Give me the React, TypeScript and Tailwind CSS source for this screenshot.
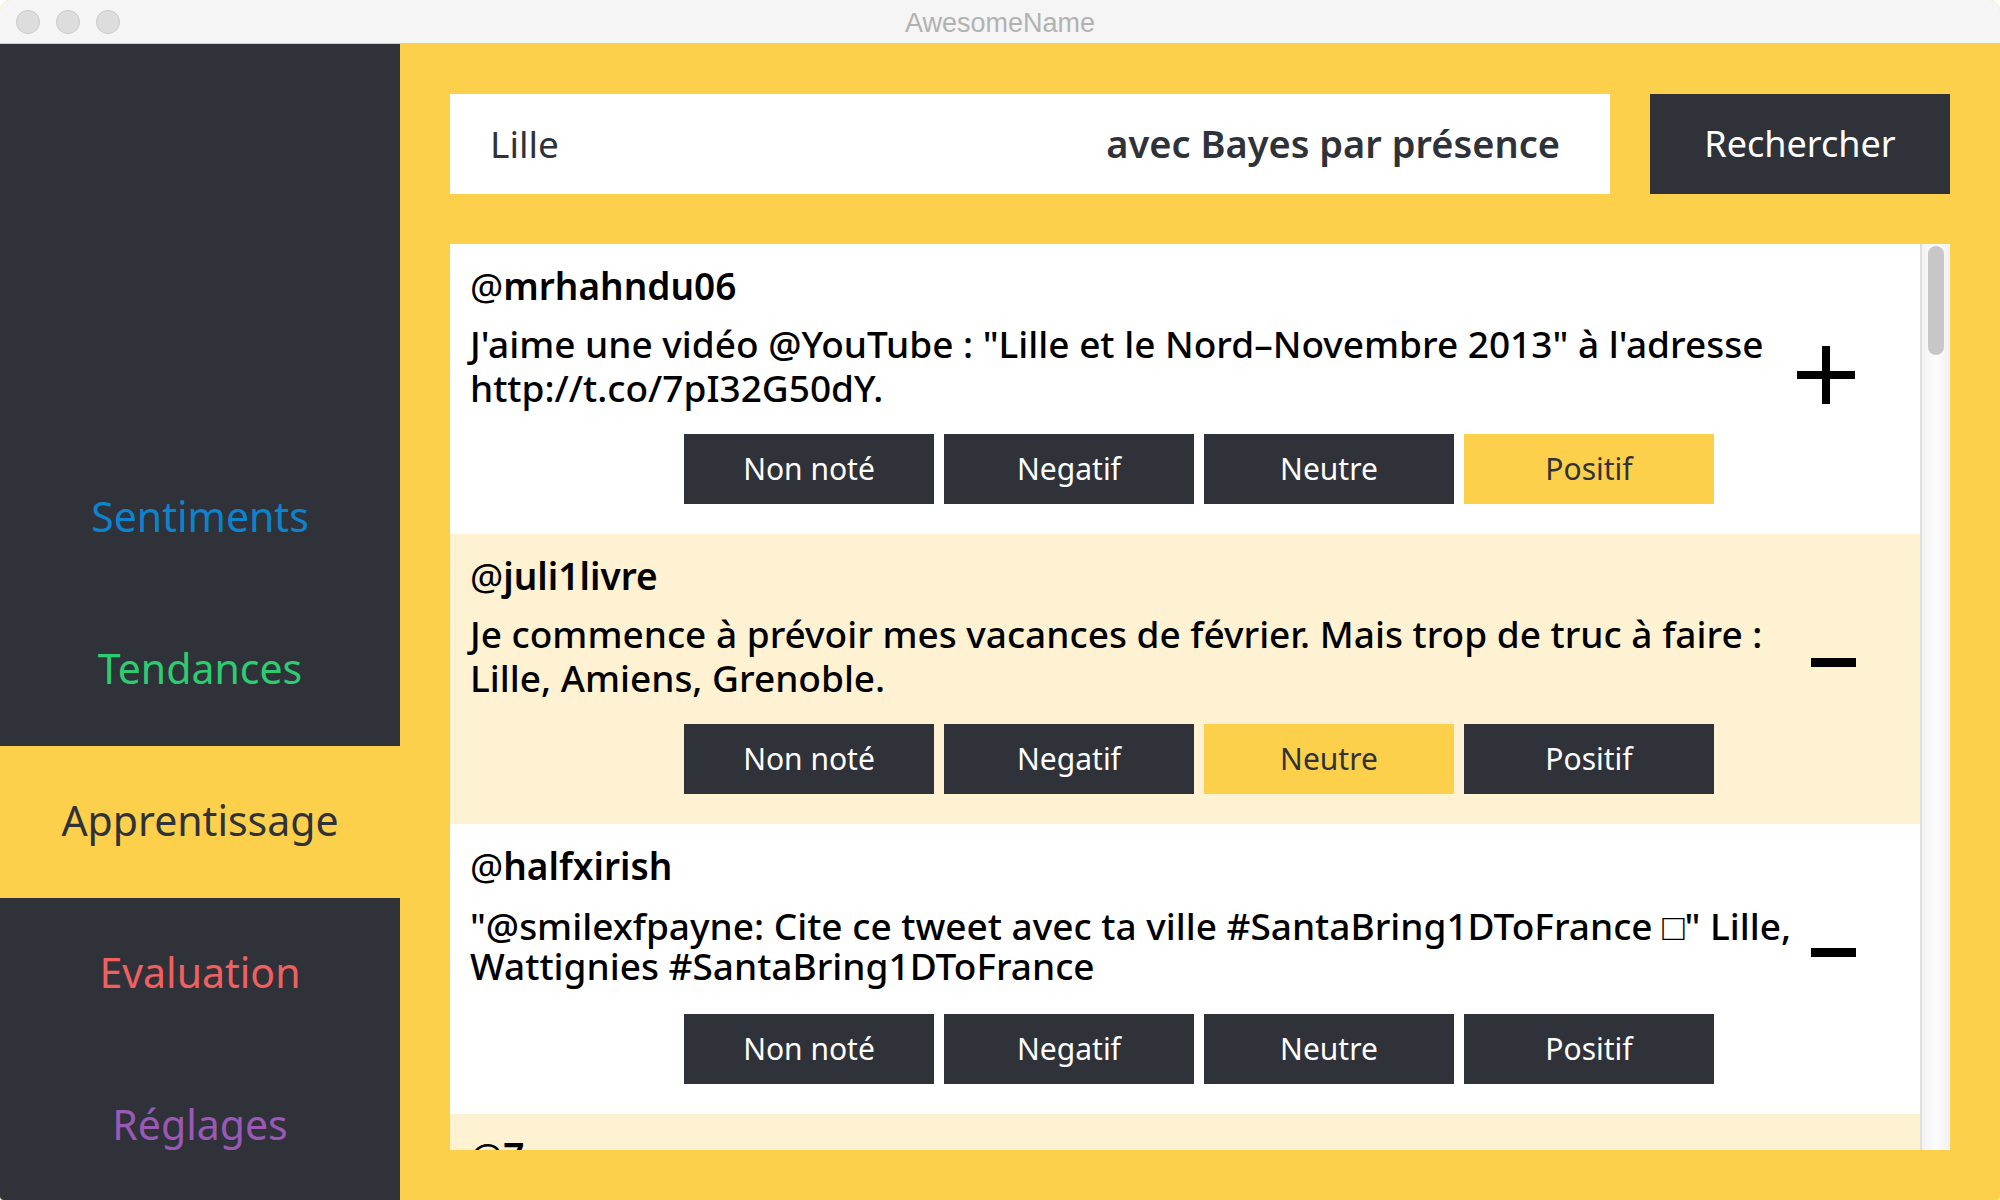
type Rating = 'Non noté' | 'Negatif' | 'Neutre' | 'Positif';

interface Tweet {
  author: string;
  text?: string;
  rating?: Rating;
  positive?: boolean;
  compact?: boolean;
}

const RATINGS: Rating[] = ['Non noté', 'Negatif', 'Neutre', 'Positif'];

const NAV = [
  { label: 'Sentiments', style: 'text-[#0e83cd]' },
  { label: 'Tendances', style: 'text-[#2ecc71]' },
  { label: 'Apprentissage', style: 'bg-[#fcd04b] text-[#30323a]', current: true },
  { label: 'Evaluation', style: 'text-[#f06060]' },
  { label: 'Réglages', style: 'text-[#9b59b6]' },
];

const TWEETS: Tweet[] = [
  {
    author: 'mrhahndu06',
    text: 'J\'aime une vidéo @YouTube : "Lille et le Nord–Novembre 2013" à l\'adresse http://t.co/7pI32G50dY.',
    rating: 'Positif',
    positive: true,
  },
  {
    author: 'juli1livre',
    text: 'Je commence à prévoir mes vacances de février. Mais trop de truc à faire : Lille, Amiens, Grenoble.',
    rating: 'Neutre',
  },
  {
    author: 'halfxirish',
    text: '"@smilexfpayne: Cite ce tweet avec ta ville #SantaBring1DToFrance □" Lille, Wattignies #SantaBring1DToFrance',
    compact: true,
  },
  { author: '7' },
];

function TitleBar() {
  return (
    <header className="relative flex h-11 shrink-0 items-center justify-center border-b border-[#cfcfcf] bg-[#f5f5f5]">
      <div className="absolute left-4 top-2.5 flex gap-4">
        <button aria-label="Fermer" className="size-6 rounded-full border border-[#cacaca] bg-[#dddddd]" />
        <button aria-label="Réduire" className="size-6 rounded-full border border-[#cacaca] bg-[#dddddd]" />
        <button aria-label="Agrandir" className="size-6 rounded-full border border-[#cacaca] bg-[#dddddd]" />
      </div>
      <h1 className="pt-0.5 font-['Liberation_Sans',sans-serif] text-[27px] leading-8 text-[#b2b2b2]">AwesomeName</h1>
    </header>
  );
}

function Sidebar() {
  return (
    <nav className="flex w-[400px] shrink-0 flex-col justify-end bg-[#30323a]">
      <div className="-mb-0.5 flex flex-col">
        {NAV.map((item) => (
          <a
            key={item.label}
            href="#"
            aria-current={item.current ? 'page' : undefined}
            className={`flex h-[152px] items-center justify-center pb-1 text-[41px] leading-none ${item.style}`}
          >
            {item.label}
          </a>
        ))}
      </div>
    </nav>
  );
}

function SearchBar() {
  return (
    <form className="flex h-[100px] shrink-0 gap-10 text-[#30323a]" onSubmit={(e) => e.preventDefault()}>
      <div className="flex min-w-0 flex-1 bg-white">
        <input
          aria-label="Recherche"
          defaultValue="Lille"
          className="min-w-0 flex-1 bg-transparent pl-10 text-[37px] outline-none"
        />
        <select
          aria-label="Méthode"
          className="appearance-none bg-transparent pb-0.5 pr-[50px] text-right text-[38px] font-semibold outline-none [text-align-last:right]"
        >
          <option>avec Bayes par présence</option>
        </select>
      </div>
      <button type="submit" className="w-[300px] bg-[#30323a] text-[36px] text-white">
        Rechercher
      </button>
    </form>
  );
}

function SentimentMark({ positive }: { positive?: boolean }) {
  return positive ? (
    <svg className="h-[58px] w-[58px]" viewBox="0 0 58 58" role="img" aria-label="Positif">
      <path d="M25 0h8v25h25v8H33v25h-8V33H0v-8h25z" />
    </svg>
  ) : (
    <svg className="ml-3.5 h-[58px] w-[45px]" viewBox="0 0 45 58" role="img" aria-label="Négatif">
      <path d="M0 22h45v9H0z" />
    </svg>
  );
}

function TweetRow({ tweet }: { tweet: Tweet }) {
  return (
    <li className="flex h-[290px] shrink-0 pl-5 text-black odd:bg-white even:bg-[#fff2d3]">
      <article className="flex min-w-0 flex-1 flex-col">
        <h2 className="pt-[17px] text-[37px] leading-[50px]">
          @<span className="font-semibold">{tweet.author}</span>
        </h2>
        {tweet.text && (
          <>
            <p
              className={
                tweet.compact
                  ? 'pt-[15px] text-[37px] font-medium leading-10'
                  : 'pt-[11px] text-[37px] font-medium leading-[44px]'
              }
            >
              {tweet.text}
            </p>
            <div className="mb-[30px] mr-[83px] mt-auto flex justify-end gap-2.5">
              {RATINGS.map((r) => (
                <button
                  key={r}
                  aria-pressed={r === tweet.rating}
                  className={
                    r === tweet.rating
                      ? 'h-[70px] w-[250px] bg-[#fcd04b] pb-0.5 text-[30px] text-[#30323a]'
                      : 'h-[70px] w-[250px] bg-[#30323a] pb-0.5 text-[30px] text-white'
                  }
                >
                  {r}
                </button>
              ))}
            </div>
          </>
        )}
      </article>
      <div className="w-[123px] shrink-0 pt-[102px]">
        {tweet.text && <SentimentMark positive={tweet.positive} />}
      </div>
    </li>
  );
}

export default function App() {
  return (
    <div className="h-screen bg-white">
      <div className="flex h-full flex-col overflow-hidden rounded-b-[4px] rounded-t-[10px] bg-[#fcd04b] font-['Noto_Sans',sans-serif]">
        <TitleBar />
        <div className="flex min-h-0 flex-1">
          <Sidebar />
          <main className="flex min-w-0 flex-1 flex-col gap-[50px] p-[50px]">
            <SearchBar />
            <section className="flex min-h-0 flex-1 bg-white">
              <ul className="flex min-w-0 flex-1 flex-col overflow-hidden">
                {TWEETS.map((t) => (
                  <TweetRow key={t.author} tweet={t} />
                ))}
              </ul>
              <div className="w-[30px] border-l-2 border-[#dfdfdf] bg-linear-to-r from-[#f2f2f2] via-[#fdfdfd] to-[#f0f0f0] pl-1.5 pt-0.5">
                <div className="h-[109px] w-4 rounded-full bg-[#c7c7c7]" />
              </div>
            </section>
          </main>
        </div>
      </div>
    </div>
  );
}
